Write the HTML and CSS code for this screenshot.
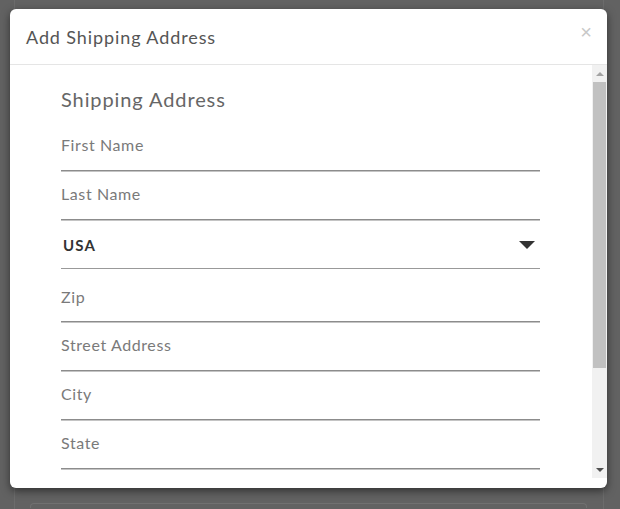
FILE: index.html
```html
<!DOCTYPE html>
<html>
<head>
<meta charset="utf-8">
<link rel="stylesheet" href="styles.css">
</head>
<body>
<div class="page">
  <div class="page-frame">
    <div class="page-box"></div>
  </div>
</div>
<div class="modal">
  <div class="modal-header">
    <h4 class="modal-title">Add Shipping Address</h4>
    <span class="close">&times;</span>
  </div>
  <div class="modal-body">
    <div class="scroll-content">
      <h3 class="section-title">Shipping Address</h3>
      <div class="field"><span class="label">First Name</span></div>
      <div class="field"><span class="label">Last Name</span></div>
      <div class="field select"><span class="value">USA</span><span class="caret"></span></div>
      <div class="field zip"><span class="label">Zip</span></div>
      <div class="field"><span class="label">Street Address</span></div>
      <div class="field"><span class="label">City</span></div>
      <div class="field"><span class="label">State</span></div>
    </div>
    <div class="scrollbar">
      <div class="sb-button"><span class="sb-arrow up"></span></div>
      <div class="sb-track"><div class="sb-thumb"></div></div>
      <div class="sb-button"><span class="sb-arrow down"></span></div>
    </div>
  </div>
  <div class="modal-bottom"></div>
</div>
</body>
</html>
```

FILE: styles.css
```css
html, body {
  margin: 0;
  padding: 0;
  height: 100%;
  overflow: hidden;
}
body {
  background: #626262;
  font-family: "Lato", "Open Sans", sans-serif;
}
.page {
  padding: 0 16px 0 14px;
  height: 100%;
  box-sizing: border-box;
}
.page-frame {
  height: 100%;
  border-left: 1px solid #6c6c6c;
  border-right: 1px solid #6c6c6c;
  padding: 503px 16px 0 15px;
  box-sizing: border-box;
  overflow: hidden;
}
.page-box {
  height: 4px;
  border: 1px solid #707070;
  border-bottom: none;
  border-radius: 4px 4px 0 0;
}
.modal {
  position: absolute;
  left: 10px;
  top: 9px;
  width: 597px;
  height: 479px;
  background: #fff;
  border-radius: 6px;
  box-shadow: 0 3px 9px rgba(0,0,0,0.5);
  display: flex;
  flex-direction: column;
  overflow: hidden;
}
.modal-header {
  height: 55px;
  border-bottom: 1px solid #e5e5e5;
  display: flex;
  align-items: center;
  justify-content: space-between;
  padding: 0 15px 0 16px;
  flex: none;
}
.modal-title {
  margin: 0;
  font-weight: 400;
  font-size: 18px;
  color: #555;
  letter-spacing: 0.9px;
}
.close {
  font-family: "Liberation Sans", sans-serif;
  font-size: 20px;
  color: #c8c8c8;
  line-height: 20px;
  margin-top: -9px;
}
.modal-body {
  height: 413px;
  display: flex;
  flex: none;
}
.scroll-content {
  flex: 1;
  overflow: hidden;
  padding: 22px 52px 0 51px;
}
.modal-bottom {
  flex: 1;
}
.section-title {
  margin: 0 0 12px;
  font-weight: 400;
  font-size: 20px;
  line-height: 24px;
  color: #666;
  letter-spacing: 0.9px;
}
.field {
  padding: 12px 0 15px;
  line-height: 20px;
  border-bottom: 1px solid #8c8c8c;
  box-shadow: 0 1px 0 #c4c4c4;
  margin-bottom: 1px;
  display: flex;
  align-items: center;
  justify-content: space-between;
}
.label {
  font-size: 16px;
  color: #7a7a7a;
  letter-spacing: 0.6px;
}
.select {
  padding: 14px 0 13px;
  box-shadow: none;
  border-bottom-color: #999;
  margin-bottom: 0;
}
.value {
  font-size: 15px;
  font-weight: 700;
  color: #333;
  letter-spacing: 1.2px;
  padding-left: 2px;
}
.caret {
  width: 0;
  height: 0;
  border-left: 8px solid transparent;
  border-right: 8px solid transparent;
  border-top: 8px solid #333;
  margin-right: 5px;
}
.zip {
  padding: 18px 0 14px;
}
.scrollbar {
  width: 15px;
  background: #f1f1f1;
  display: flex;
  flex-direction: column;
}
.sb-button {
  height: 17px;
  display: flex;
  align-items: center;
  justify-content: center;
  flex: none;
}
.sb-arrow {
  width: 0;
  height: 0;
  border-left: 4px solid transparent;
  border-right: 4px solid transparent;
}
.sb-arrow.up {
  border-bottom: 4px solid #a3a3a3;
}
.sb-arrow.down {
  border-top: 4px solid #505050;
}
.sb-track {
  flex: 1;
  padding: 0 1px;
}
.sb-thumb {
  height: 286px;
  background: #c1c1c1;
}
```
